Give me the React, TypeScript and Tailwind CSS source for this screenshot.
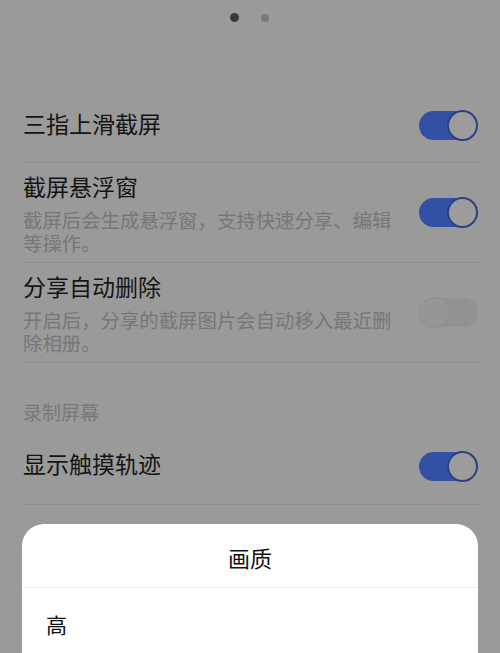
import React from "react";

const font = { fontFamily: '"Noto Sans CJK SC", "Noto Sans", sans-serif' };

function Toggle({ on }: { on: boolean }) {
  if (on) {
    return (
      <div className="relative w-[59px] h-[31px] shrink-0 self-center">
        <div className="absolute left-0 right-[2px] top-[1px] bottom-[1px] rounded-full bg-[#3250a6]" />
        <div className="absolute right-0 top-0 w-[31px] h-[31px] rounded-full bg-[#9c9c9c] border-[2px] border-[#2b3f86]" />
      </div>
    );
  }
  return (
    <div className="relative w-[59px] h-[31px] shrink-0 self-center">
      <div className="absolute left-[2px] right-0 top-[1px] bottom-[1px] rounded-full bg-[#929292]" />
      <div className="absolute left-0 top-0 w-[31px] h-[31px] rounded-full bg-[#969696] border-[1px] border-[#8f8f8f]" />
    </div>
  );
}

function Divider() {
  return <div className="ml-[23px] mr-[20px] h-px bg-[#8f8f8f]" />;
}

export default function App() {
  return (
    <div
      className="relative w-[500px] h-[653px] overflow-hidden bg-[#9a9a9a]"
      style={font}
    >
      {/* page dots */}
      <div className="flex justify-center items-center gap-[22px] pt-[13px] h-[22px]">
        <div className="w-[9px] h-[9px] rounded-full bg-[#3a3a3a] ml-[-1px]" />
        <div className="w-[8px] h-[8px] rounded-full bg-[#7a7a7a]" />
      </div>

      <div className="h-[66px]" />

      {/* row 1 */}
      <div className="flex items-center h-[74px] pl-[23px] pr-[22px]">
        <div className="flex-1 text-[23px] leading-[30px] text-[#141414] pb-[4px]">三指上滑截屏</div>
        <Toggle on />
      </div>
      <Divider />

      {/* row 2 */}
      <div className="flex items-start h-[99px] pl-[23px] pr-[22px]">
        <div className="flex-1 pt-[8px]">
          <div className="text-[23px] leading-[30px] text-[#141414]">截屏悬浮窗</div>
          <div className="w-[375px] text-[19.4px] leading-[23px] text-[#777777] mt-[7px]">
            截屏后会生成悬浮窗，支持快速分享、编辑等操作。
          </div>
        </div>
        <Toggle on />
      </div>
      <Divider />

      {/* row 3 */}
      <div className="flex items-start h-[99px] pl-[23px] pr-[22px]">
        <div className="flex-1 pt-[8px]">
          <div className="text-[23px] leading-[30px] text-[#141414]">分享自动删除</div>
          <div className="w-[375px] text-[19.4px] leading-[23px] text-[#777777] mt-[7px]">
            开启后，分享的截屏图片会自动移入最近删除相册。
          </div>
        </div>
        <Toggle on={false} />
      </div>
      <Divider />

      {/* section header */}
      <div className="pl-[23px] pt-[37px] pb-[5px] text-[19px] leading-[24px] text-[#787878]">
        录制屏幕
      </div>

      {/* row 4 */}
      <div className="flex items-center h-[75px] pl-[23px] pr-[22px]">
        <div className="flex-1 text-[23px] leading-[30px] text-[#141414] pb-[8px]">显示触摸轨迹</div>
        <Toggle on />
      </div>
      <Divider />

      {/* row 5 (hidden behind sheet) */}
      <div className="flex items-center h-[75px] pl-[23px] pr-[22px]">
        <div className="flex-1 text-[23px] leading-[30px] text-[#141414]">录屏画质</div>
      </div>

      {/* bottom sheet */}
      <div className="absolute left-[22px] right-[22px] top-[524px] bottom-0 bg-white rounded-t-[22px]">
        <div className="h-[63px] flex items-center justify-center text-[22px] text-[#111111] pt-[3px]">
          画质
        </div>
        <div className="h-px bg-[#f0f0f0]" />
        <div className="h-[78px] flex items-center pl-[24px] pb-[4px] text-[21px] text-[#111111]">
          高
        </div>
      </div>
    </div>
  );
}
